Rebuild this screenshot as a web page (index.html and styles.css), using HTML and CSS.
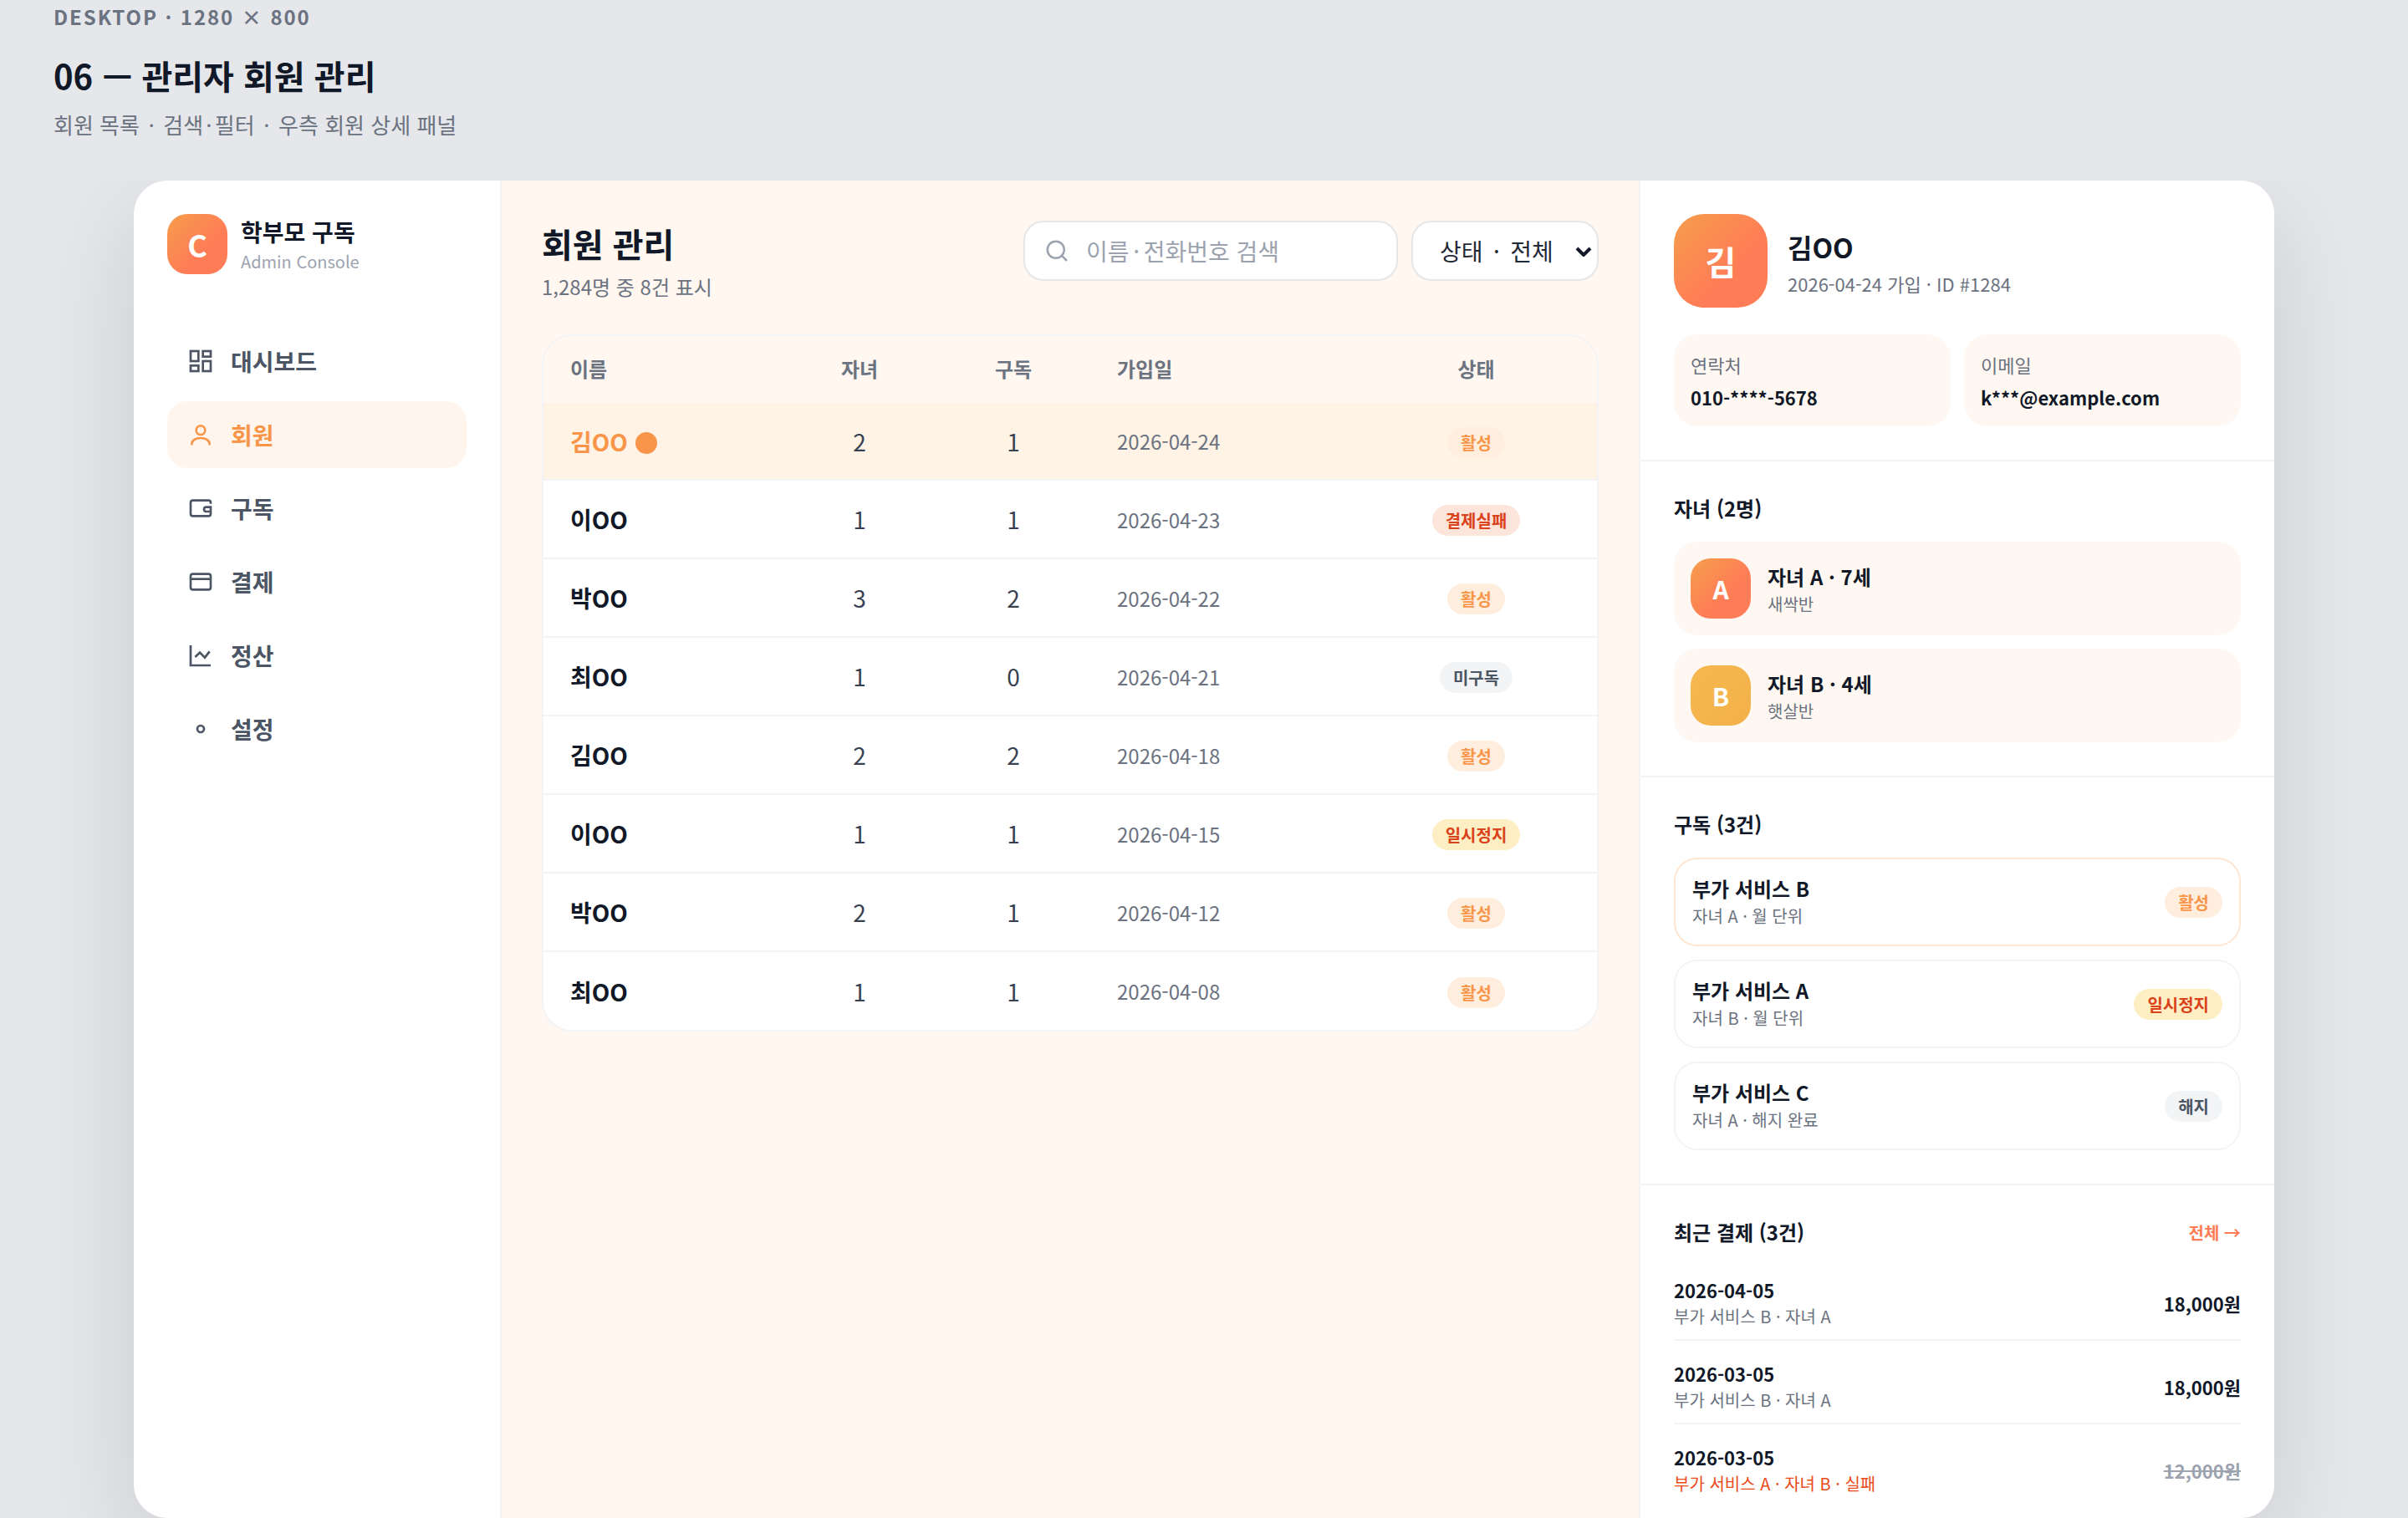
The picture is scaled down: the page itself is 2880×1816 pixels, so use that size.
FILE: index.html
```html
<!DOCTYPE html>
<html lang="ko">
<head>
	<meta charset="UTF-8">
	<meta name="viewport" content="width=device-width, initial-scale=1.0">
	<title>06 — 관리자 회원 관리</title>
	<link rel="stylesheet" href="styles.css">
</head>
<body>
	<div class="page">
		<header class="page-head">
			<div class="page-label">DESKTOP · 1280 × 800</div>
			<h1 class="page-title">06 — 관리자 회원 관리</h1>
			<p class="page-sub">회원 목록 &#8202;&#8202;·&#8202;&#8202; 검색&#8202;&#8202;·&#8202;&#8202;필터 &#8202;&#8202;·&#8202;&#8202; 우측 회원 상세 패널</p>
		</header>

		<div class="stage">
		<div class="frame">
			<aside class="sidebar">
				<div class="brand">
					<div class="brand-logo">C</div>
					<div class="brand-text">
						<div class="brand-name">학부모 구독</div>
						<div class="brand-sub">Admin Console</div>
					</div>
				</div>
				<nav class="nav">
					<a class="nav-item">
						<svg class="icon" viewBox="0 0 24 24"><rect x="3" y="3" width="7" height="9"/><rect x="14" y="3" width="7" height="5"/><rect x="14" y="12" width="7" height="9"/><rect x="3" y="16" width="7" height="5"/></svg>
						대시보드
					</a>
					<a class="nav-item on">
						<svg class="icon" viewBox="0 0 24 24"><circle cx="12" cy="8" r="4"/><path d="M4 20.500c0-3.500 3.800-5.500 8-5.500s8 2 8 5.500" stroke-linecap="round"/></svg>
						회원
					</a>
					<a class="nav-item">
						<svg class="icon" viewBox="0 0 24 24"><path d="M21 8V7a2 2 0 0 0-2-2H5a2 2 0 0 0-2 2v10a2 2 0 0 0 2 2h14a2 2 0 0 0 2-2v-6h-4a2 2 0 0 0 0 4h4"/></svg>
						구독
					</a>
					<a class="nav-item">
						<svg class="icon" viewBox="0 0 24 24"><rect x="3" y="5" width="18" height="14" rx="2"/><path d="M3 9.500h18"/></svg>
						결제
					</a>
					<a class="nav-item">
						<svg class="icon" viewBox="0 0 24 24"><path d="M3 3v18h18"/><path d="M7 13.500l4.250-4 4.500 4.500L20 8.500"/></svg>
						정산
					</a>
					<a class="nav-item">
						<svg class="icon" viewBox="0 0 24 24"><circle cx="12" cy="12" r="3"/></svg>
						설정
					</a>
				</nav>
			</aside>

			<main class="main">
				<div class="main-head">
					<div>
						<h2 class="main-title">회원 관리</h2>
						<div class="main-sub">1,284명 중 8건 표시</div>
					</div>
					<div class="tools">
						<label class="search">
							<svg class="search-icon" viewBox="0 0 24 24"><circle cx="11" cy="11" r="8"/><path d="M21 21l-4.300-4.300" stroke-linecap="round"/></svg>
							<input class="search-input" type="text" placeholder="이름&#8198;·&#8198;전화번호 검색">
						</label>
						<div class="filter-wrap">
							<select class="filter">
								<option>상태 &#8198;·&#8198; 전체</option>
							</select>
							<svg class="filter-arrow" viewBox="0 0 20 12"><path d="M2 2l8 8 8-8"/></svg>
						</div>
					</div>
				</div>

				<div class="table-card">
					<table class="members">
						<colgroup>
							<col class="col-name"><col class="col-num"><col class="col-num"><col class="col-date"><col class="col-state">
						</colgroup>
						<thead>
							<tr><th class="left">이름</th><th>자녀</th><th>구독</th><th class="left">가입일</th><th>상태</th></tr>
						</thead>
						<tbody>
							<tr class="on"><td class="name">김OO<span class="dot"></span></td><td class="num">2</td><td class="num">1</td><td class="date">2026-04-24</td><td class="state"><span class="badge ok">활성</span></td></tr>
							<tr><td class="name">이OO</td><td class="num">1</td><td class="num">1</td><td class="date">2026-04-23</td><td class="state"><span class="badge fail">결제실패</span></td></tr>
							<tr><td class="name">박OO</td><td class="num">3</td><td class="num">2</td><td class="date">2026-04-22</td><td class="state"><span class="badge ok">활성</span></td></tr>
							<tr><td class="name">최OO</td><td class="num">1</td><td class="num">0</td><td class="date">2026-04-21</td><td class="state"><span class="badge off">미구독</span></td></tr>
							<tr><td class="name">김OO</td><td class="num">2</td><td class="num">2</td><td class="date">2026-04-18</td><td class="state"><span class="badge ok">활성</span></td></tr>
							<tr><td class="name">이OO</td><td class="num">1</td><td class="num">1</td><td class="date">2026-04-15</td><td class="state"><span class="badge pause">일시정지</span></td></tr>
							<tr><td class="name">박OO</td><td class="num">2</td><td class="num">1</td><td class="date">2026-04-12</td><td class="state"><span class="badge ok">활성</span></td></tr>
							<tr><td class="name">최OO</td><td class="num">1</td><td class="num">1</td><td class="date">2026-04-08</td><td class="state"><span class="badge ok">활성</span></td></tr>
						</tbody>
					</table>
				</div>
			</main>

			<aside class="panel">
				<section class="sec">
					<div class="profile">
						<div class="profile-avatar">김</div>
						<div class="profile-text">
							<div class="profile-name">김OO</div>
							<div class="profile-sub">2026-04-24 가입 · ID #1284</div>
						</div>
					</div>
					<div class="info">
						<div class="info-box">
							<div class="info-label">연락처</div>
							<div class="info-value">010-****-5678</div>
						</div>
						<div class="info-box">
							<div class="info-label">이메일</div>
							<div class="info-value">k***@example.com</div>
						</div>
					</div>
				</section>

				<section class="sec">
					<h3 class="sec-title">자녀 (2명)</h3>
					<div class="stack">
						<div class="child">
							<div class="child-avatar">A</div>
							<div class="child-text">
								<div class="child-name">자녀 A · 7세</div>
								<div class="small">새싹반</div>
							</div>
						</div>
						<div class="child">
							<div class="child-avatar yellow">B</div>
							<div class="child-text">
								<div class="child-name">자녀 B · 4세</div>
								<div class="small">햇살반</div>
							</div>
						</div>
					</div>
				</section>

				<section class="sec">
					<h3 class="sec-title">구독 (3건)</h3>
					<div class="stack">
						<div class="sub on">
							<div>
								<div class="sub-name">부가 서비스 B</div>
								<div class="small">자녀 A · 월 단위</div>
							</div>
							<span class="badge ok">활성</span>
						</div>
						<div class="sub">
							<div>
								<div class="sub-name">부가 서비스 A</div>
								<div class="small">자녀 B · 월 단위</div>
							</div>
							<span class="badge pause">일시정지</span>
						</div>
						<div class="sub">
							<div>
								<div class="sub-name">부가 서비스 C</div>
								<div class="small">자녀 A · 해지 완료</div>
							</div>
							<span class="badge off">해지</span>
						</div>
					</div>
				</section>

				<section class="sec last">
					<div class="sec-head">
						<h3 class="sec-title">최근 결제 (3건)</h3>
						<a class="all">전체 →</a>
					</div>
					<div class="pay">
						<div>
							<div class="pay-date">2026-04-05</div>
							<div class="small">부가 서비스 B · 자녀 A</div>
						</div>
						<div class="pay-amount">18,000원</div>
					</div>
					<div class="pay">
						<div>
							<div class="pay-date">2026-03-05</div>
							<div class="small">부가 서비스 B · 자녀 A</div>
						</div>
						<div class="pay-amount">18,000원</div>
					</div>
					<div class="pay">
						<div>
							<div class="pay-date">2026-03-05</div>
							<div class="small red">부가 서비스 A · 자녀 B · 실패</div>
						</div>
						<div class="pay-amount failed">12,000원</div>
					</div>
				</section>
			</aside>
		</div>
		</div>
	</div>
</body>
</html>
```

FILE: styles.css
```css
*{padding:0;margin:0;box-sizing:border-box;}
html,body {height:100%;overflow:hidden;}
body {background:#e5e7eb;color:#111827;font-family:"Noto Sans CJK KR","Noto Sans",sans-serif;}

.page {height:1816px;overflow:hidden;}
.page-head {height:216px;padding:0 64px;}
.page-label {font-size:24px;font-weight:700;color:#6b7280;letter-spacing:0.08em;line-height:40px;}
.page-title {font-size:40px;font-weight:700;line-height:64px;margin-top:18px;}
.page-sub {font-size:26px;color:#6b7280;line-height:40px;margin-top:7px;}

/* the frame's shadow stops at the edges of this box */
.stage {margin:0 64px;padding:0 96px;height:1600px;overflow:hidden;}
.frame {display:flex;width:2560px;height:1600px;background:#fff;border-radius:40px;overflow:hidden;box-shadow:0 40px 120px rgba(0,0,0,.12);}

/* sidebar */
.sidebar {width:440px;flex:none;padding:40px;border-right:2px solid #f3f4f6;}
.brand {display:flex;align-items:center;gap:16px;margin-bottom:64px;}
.brand-logo {width:72px;height:72px;border-radius:24px;background:linear-gradient(135deg,#f59e4b,#ff7d56 60%);color:#fff;font-size:36px;font-weight:700;display:flex;align-items:center;justify-content:center;}
.brand-text {padding-top:2px;}
.brand-name {font-size:28px;font-weight:700;line-height:38px;}
.brand-sub {font-size:20px;color:#9ca3af;line-height:30px;margin-top:2px;}
.nav {display:flex;flex-direction:column;gap:8px;}
.nav-item {display:flex;align-items:center;gap:20px;height:80px;padding:0 24px;border-radius:24px;font-size:28px;font-weight:600;color:#4b5563;}
.nav-item.on {background:#fff5ec;color:#f99549;}
.icon {width:32px;height:32px;fill:none;stroke:currentColor;stroke-width:2;}

/* main */
.main {width:1360px;flex:none;padding:48px;background:#fff7f0;}
.main-head {display:flex;justify-content:space-between;margin-bottom:38px;}
.main-title {font-size:40px;font-weight:700;line-height:54px;}
.main-sub {font-size:24px;color:#6b7280;line-height:38px;margin-top:6px;}
.tools {display:flex;gap:16px;}
.search {display:flex;align-items:center;gap:20px;width:448px;height:72px;padding:0 23px;background:#fff;border:2px solid #e5e7eb;border-radius:24px;}
.search-icon {width:30px;height:30px;flex:none;fill:none;stroke:#9ca3af;stroke-width:2;}
.search-input {flex:1;min-width:0;border:0;outline:0;background:none;font:inherit;font-size:28px;color:#111827;}
.search-input::placeholder {color:#9ca3af;opacity:1;}
.filter-wrap {position:relative;width:224px;height:72px;}
.filter {appearance:none;width:100%;height:100%;padding:0 32px;background:#fff;border:2px solid #e5e7eb;border-radius:24px;font:inherit;font-size:28px;color:#1f2937;}
.filter-arrow {position:absolute;right:8px;top:31px;width:20px;height:12px;fill:none;stroke:#111827;stroke-width:4;pointer-events:none;}

.table-card {border:2px solid #f3f4f6;border-radius:36px;overflow:hidden;}
.members {width:100%;border-collapse:collapse;table-layout:fixed;}
.col-name {width:286px;}
.col-num {width:184px;}
.col-date {width:317px;}
.col-state {width:289px;}
.members th {height:80px;padding-bottom:3px;font-size:24px;font-weight:600;color:#6b7280;text-align:center;}
.members th.left {text-align:left;padding-left:32px;}
.members td {height:92px;padding:0 32px;background:#fff;text-align:center;}
.members tbody tr + tr td {height:94px;border-top:2px solid #f3f4f6;}
.members tr.on td {background:#fff3e6;}
.members td.name {text-align:left;font-size:28px;font-weight:700;}
.members tr.on td.name {color:#f99549;}
.dot {display:inline-block;width:26px;height:26px;margin-left:9px;border-radius:50%;background:#f99549;vertical-align:-3px;}
.members td.num {font-size:28px;color:#374151;}
.members td.date {text-align:left;font-size:24px;color:#6b7280;}
.members td.state {padding-top:3px;}

.badge {display:inline-block;padding:4px 16px;border-radius:999px;font-size:20px;font-weight:700;white-space:nowrap;}
.badge.ok {background:#ffeedd;color:#f99549;}
.badge.fail {background:#fde5db;color:#d9421a;}
.badge.pause {background:#fdefc3;color:#d9421a;}
.badge.off {background:#f3f4f6;color:#4b5563;}

/* panel */
.panel {width:760px;flex:none;border-left:2px solid #f3f4f6;background:#fff;}
.sec {padding:40px;border-bottom:2px solid #f3f4f6;}
.sec.last {border-bottom:0;}
.profile {display:flex;align-items:center;gap:24px;margin-bottom:32px;}
.profile-avatar {width:112px;height:112px;border-radius:36px;background:linear-gradient(135deg,#f59e4b,#ff7d56 60%);color:#fff;font-size:40px;font-weight:700;display:flex;align-items:center;justify-content:center;}
.profile-text {padding-top:3px;}
.profile-name {font-size:32px;font-weight:700;line-height:46px;}
.profile-sub {font-size:22px;color:#6b7280;line-height:34px;margin-top:4px;}
.info {display:grid;grid-template-columns:1fr 1fr;gap:16px;}
.info-box {padding:20px 20px 16px;background:#fff8f2;border-radius:28px;}
.info-label {font-size:22px;color:#6b7280;line-height:32px;}
.info-value {font-size:22px;font-weight:700;line-height:38px;margin-top:4px;}

.sec-title {font-size:24px;font-weight:700;line-height:32px;}
.stack {display:flex;flex-direction:column;gap:16px;margin-top:24px;}
.child {display:flex;align-items:center;gap:20px;height:112px;padding:0 20px;background:#fff8f2;border-radius:28px;}
.child-avatar {width:72px;height:72px;border-radius:24px;background:linear-gradient(135deg,#f59e4b,#ff7d56 60%);color:#fff;font-size:30px;font-weight:700;display:flex;align-items:center;justify-content:center;}
.child-avatar.yellow {background:linear-gradient(135deg,#f6b84f,#f4b04a);}
.child-text {padding-top:4px;}
.child-name {font-size:24px;font-weight:700;line-height:32px;}
.small {font-size:20px;color:#6b7280;line-height:30px;margin-top:2px;}
.small.red {color:#ea4a1a;}
.sub {display:flex;align-items:center;justify-content:space-between;height:106px;padding:0 20px;border:2px solid #f3f4f6;border-radius:28px;}
.sub.on {border-color:#ffe6d0;}
.sub-name {font-size:24px;font-weight:700;line-height:32px;}

.sec-head {display:flex;justify-content:space-between;align-items:center;margin-bottom:14px;}
.all {font-size:20px;font-weight:700;color:#ff7d56;}
.pay {display:flex;align-items:center;justify-content:space-between;padding:24px 0 12px;border-bottom:2px solid #f3f4f6;}
.pay:last-child {border-bottom:0;}
.pay-date {font-size:22px;font-weight:700;line-height:30px;}
.pay-amount {font-size:22px;font-weight:700;}
.pay-amount.failed {color:#9ca3af;text-decoration:line-through;}
```
